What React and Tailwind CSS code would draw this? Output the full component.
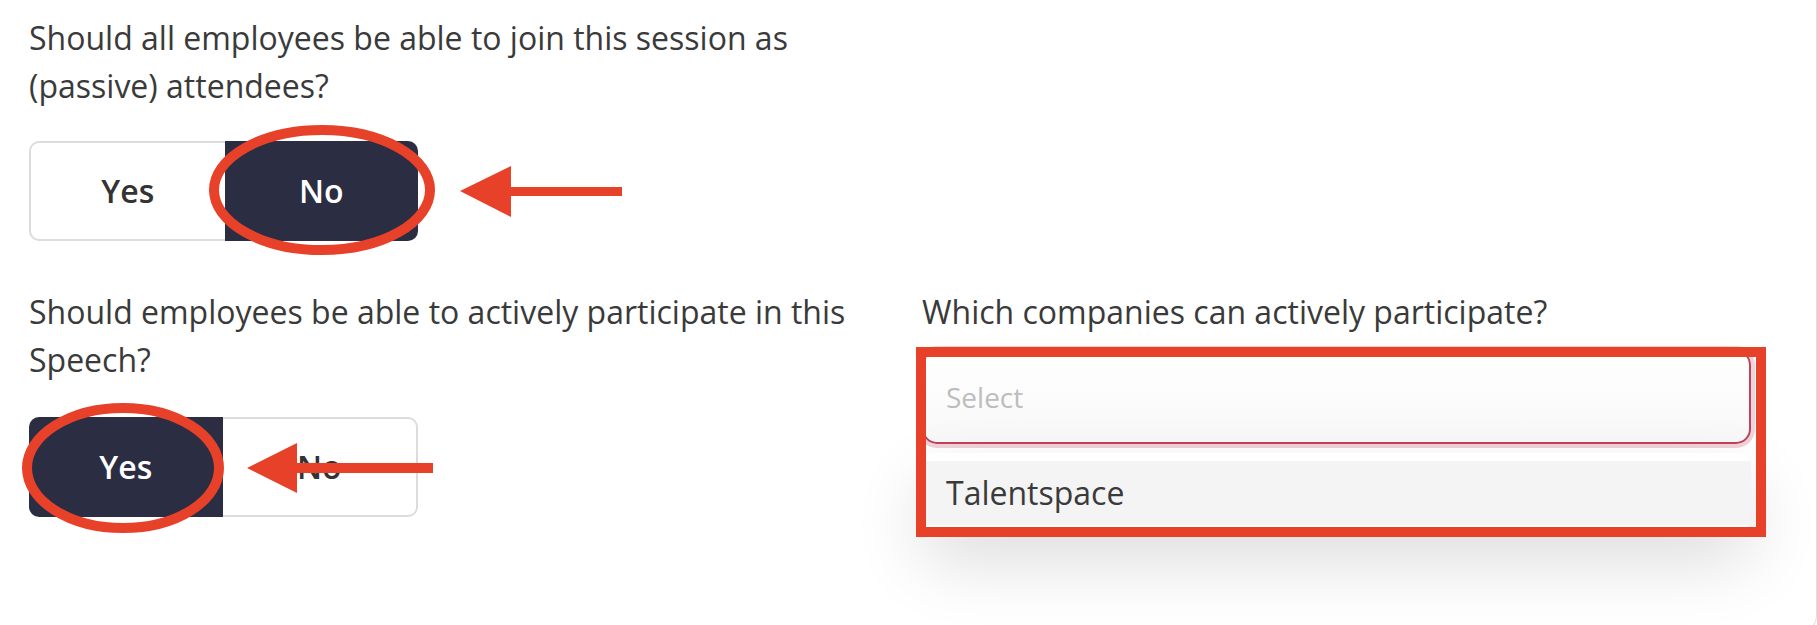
import clsx from 'clsx';

const Toggle = ({ value, className }) => {
  const active = 'bg-[#2b2d42] text-white';
  const idle = 'border-2 border-[#dcdcdc] text-[#333333]';

  return (
    <div className={clsx('flex h-[100px] w-[389px] text-[32px] font-semibold', className)}>
      <button
        type="button"
        className={clsx('flex-1 rounded-l-[10px]', value === 'yes' ? active : clsx(idle, 'border-r-0'))}
      >
        Yes
      </button>
      <button
        type="button"
        className={clsx('flex-1 rounded-r-[10px]', value === 'no' ? active : clsx(idle, 'border-l-0'))}
      >
        No
      </button>
    </div>
  );
};

// red markup drawn over the screenshot
const Annotations = () => (
  <svg className="pointer-events-none absolute inset-0" width="1817" height="625" viewBox="0 0 1817 625">
    <g fill="none" stroke="#e8412a" strokeWidth="10">
      <ellipse cx="322" cy="190" rx="108" ry="60" />
      <ellipse cx="123" cy="468" rx="96" ry="60" />
      <rect x="921" y="352" width="840" height="180" />
    </g>
    <g fill="#e8412a">
      <rect x="508" y="187" width="114" height="9" />
      <polygon points="460,191 511,166 511,217" />
      <rect x="295" y="463" width="138" height="10" />
      <polygon points="247,468 297,443 297,493" />
    </g>
  </svg>
);

const App = () => {
  return (
    <div className="relative h-[625px] w-[1817px] overflow-hidden bg-white font-['Open_Sans',sans-serif] text-[#3a3a3a]">
      <div className="h-[632px] rounded-br-[16px] border-r border-b border-[#dedede] pt-[14px] pr-[65px] pl-[29px]">
        {/* Passive attendees */}
        <div className="grid grid-cols-2 gap-x-16">
          <div>
            <p className="text-[32px] leading-[48px]">
              Should all employees be able to join this session as (passive) attendees?
            </p>
            <Toggle value="no" className="mt-[31px]" />
          </div>
        </div>

        {/* Active participation */}
        <div className="mt-[47px] grid grid-cols-2 gap-x-16">
          <div>
            <p className="text-[32px] leading-[48px]">
              Should employees be able to actively participate in this Speech?
            </p>
            <Toggle value="yes" className="mt-[33px]" />
          </div>

          <div>
            <p className="text-[32px] leading-[48px]">Which companies can actively participate?</p>
            <div className="mt-[14px] flex h-[94px] items-center rounded-[15px] border-2 border-[#c2415b] bg-gradient-to-b from-white to-[#f8f8f8] px-[22px] text-[28px] text-[#bdbdbd] shadow-[0_0_0_4px_#efd3d9]">
              Select
            </div>
            <div className="mt-[9px] rounded-[12px] bg-white pt-[8px] pb-[6px] shadow-[0_30px_70px_rgba(0,0,0,0.14)]">
              <div className="flex h-[64px] items-center bg-[#f4f4f4] px-[24px] text-[32px]">Talentspace</div>
            </div>
          </div>
        </div>
      </div>

      <Annotations />
    </div>
  );
};

export default App;
